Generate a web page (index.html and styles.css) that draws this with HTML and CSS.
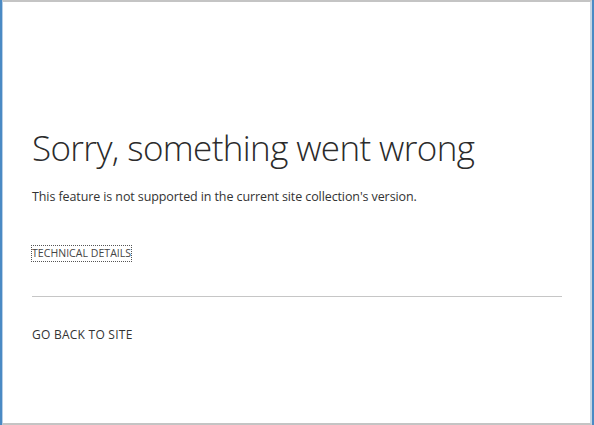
FILE: index.html
```
<!DOCTYPE html>
<html>
<head>
<meta charset="utf-8">
<link rel="stylesheet" href="styles.css">
</head>
<body>
<div class="frame">
  <div class="inner">
    <main class="content">
      <h1 class="title">Sorry, something went wrong</h1>
      <p class="message">This feature is not supported in the current site collection's version.</p>
      <a class="details" href="#">TECHNICAL DETAILS</a>
      <hr class="rule">
      <a class="back" href="#">GO BACK TO SITE</a>
    </main>
  </div>
</div>
</body>
</html>
```

FILE: styles.css
```
html, body {
  margin: 0;
  padding: 0;
  background: #fff;
}
.frame {
  width: 594px;
  height: 425px;
  box-sizing: border-box;
  border-left: 2px solid #4a8ac4;
  border-right: 2px solid #4a8ac4;
  background: #fff;
}
.inner {
  height: 100%;
  box-sizing: border-box;
  border-top: 2px solid #c4c4c4;
  border-bottom: 2px solid #c4c4c4;
  border-left: 1px solid #b8cfe6;
  border-right: 2px solid #c8d6e4;
}
.content {
  padding: 122px 28px 0 29px;
  display: flex;
  flex-direction: column;
  align-items: flex-start;
  font-family: "Open Sans", "Noto Sans", sans-serif;
  color: #333;
}
.title {
  margin: 0;
  font-weight: 300;
  font-size: 35px;
  line-height: 48px;
  color: #2b2b2b;
  letter-spacing: -0.62px;
}
.message {
  margin: 16px 0 0 0;
  font-size: 12.5px;
  line-height: 18px;
  color: #333;
  letter-spacing: -0.1px;
}
.details {
  margin-top: 40px;
  font-size: 10.5px;
  line-height: 13px;
  color: #444;
  text-decoration: none;
  outline: 1px dotted #555;
  padding: 1px 0;
  letter-spacing: 0.05px;
}
.rule {
  align-self: stretch;
  margin: 35px 0 0 0;
  border: 0;
  border-top: 1px solid #c6c6c6;
  height: 0;
}
.back {
  margin-top: 30px;
  font-size: 12px;
  line-height: 16px;
  color: #333;
  text-decoration: none;
  letter-spacing: 0.25px;
}
```
